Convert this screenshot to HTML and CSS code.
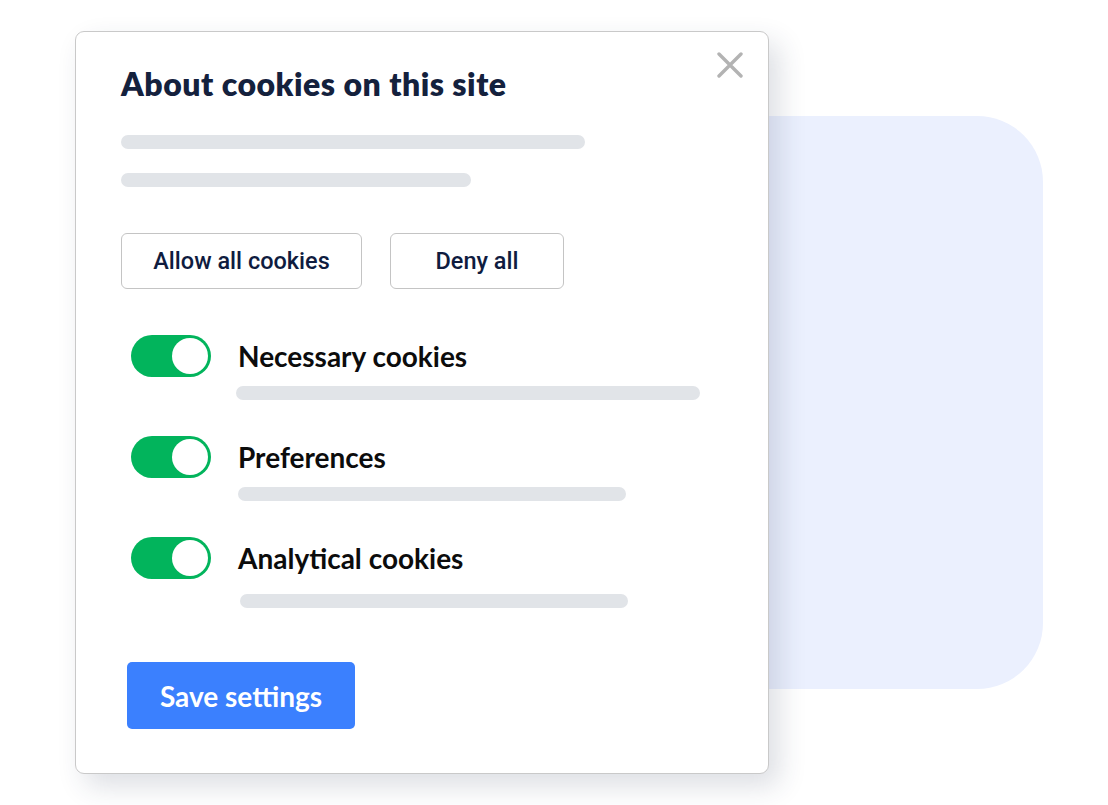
FILE: index.html
```html
<html lang="en">
    <head>
        <title>Cookie settings</title>
        <link rel="stylesheet" href="styles.css">
    </head>
    <body>
        <div class="stage">
            <div class="backdrop"></div>
            <div class="card">
                <button class="close" type="button" aria-label="Close">
                    <svg width="26" height="26" viewBox="0 0 26 26">
                        <path d="M2 2 L24 24 M24 2 L2 24" stroke="#b3b3b3" stroke-width="3.4" stroke-linecap="round" fill="none"/>
                    </svg>
                </button>
                <h1 class="title">About cookies on this site</h1>
                <div class="lines">
                    <div class="bar bar-long"></div>
                    <div class="bar bar-short"></div>
                </div>
                <div class="actions">
                    <button class="outline outline-wide" type="button">Allow all cookies</button>
                    <button class="outline outline-narrow" type="button">Deny all</button>
                </div>
                <div class="options">
                    <div class="option">
                        <span class="toggle"><span class="knob"></span></span>
                        <span class="label">Necessary cookies</span>
                        <div class="bar bar-wide bar-first"></div>
                    </div>
                    <div class="option">
                        <span class="toggle"><span class="knob"></span></span>
                        <span class="label">Preferences</span>
                        <div class="bar bar-mid"></div>
                    </div>
                    <div class="option">
                        <span class="toggle"><span class="knob"></span></span>
                        <span class="label">Analytical cookies</span>
                        <div class="bar bar-mid bar-last"></div>
                    </div>
                </div>
                <button class="save" type="button">Save settings</button>
            </div>
        </div>
    </body>
</html>
```

FILE: styles.css
```css
body {
    margin: 0;
    background: #fff;
    font-family: Lato, "Noto Sans", sans-serif;
}
.stage {
    position: relative;
    width: 1108px;
    height: 805px;
    padding: 31px 0 0 75px;
    box-sizing: border-box;
}

/* light blue panel behind the dialog */
.backdrop {
    position: absolute;
    left: 420px;
    top: 116px;
    width: 623px;
    height: 573px;
    background: #ebf0fe;
    border-radius: 0 66px 66px 0;
}

.card {
    position: relative;
    width: 694px;
    height: 743px;
    box-sizing: border-box;
    padding: 0 0 0 45px;
    background: #fff;
    border: 1px solid #c9c9c9;
    border-radius: 9px;
    box-shadow: 10px 12px 28px rgba(40, 50, 80, 0.16);
}
.close {
    position: absolute;
    top: 20px;
    right: 25px;
    width: 26px;
    height: 26px;
    padding: 0;
    border: none;
    background: none;
}
.close svg {
    display: block;
}

.title {
    margin: 34px 0 0 0;
    font-size: 32px;
    line-height: 36px;
    letter-spacing: 0.5px;
    font-weight: 800;
    color: #14213d;
}

.lines {
    display: flex;
    flex-direction: column;
    gap: 24px;
    margin-top: 33px;
}
.bar {
    height: 14px;
    border-radius: 7px;
    background: #e1e4e8;
}
.bar-long {
    width: 464px;
}
.bar-short {
    width: 350px;
}

.actions {
    display: flex;
    gap: 28px;
    margin-top: 46px;
}
.outline {
    height: 56px;
    box-sizing: border-box;
    border: 1px solid #c4c4c4;
    border-radius: 6px;
    background: #fff;
    font-family: Roboto, sans-serif;
    font-weight: 500;
    font-size: 23.5px;
    color: #0f1c3f;
}
.outline-wide {
    width: 241px;
}
.outline-narrow {
    width: 174px;
}

.options {
    display: flex;
    flex-direction: column;
    margin-top: 46px;
    padding-left: 10px;
}
.option {
    display: grid;
    grid-template-columns: 80px 1fr;
    column-gap: 27px;
    align-items: center;
    height: 101px;
    align-content: start;
}
.toggle {
    display: flex;
    justify-content: flex-end;
    align-items: center;
    width: 80px;
    height: 42px;
    padding: 3px;
    box-sizing: border-box;
    border-radius: 21px;
    background: #02b45c;
}
.knob {
    width: 36px;
    height: 36px;
    border-radius: 50%;
    background: #fff;
}
.label {
    font-size: 28px;
    font-weight: 700;
    color: #0c0c0c;
}
.option .bar {
    grid-column: 2;
    margin-top: 9px;
}
.bar-wide {
    width: 464px;
}
.bar-mid {
    width: 388px;
}
.bar-first {
    margin-left: -2px;
}
.option .bar-last {
    margin-top: 15px;
    margin-left: 2px;
}

.save {
    display: block;
    margin: 24px 0 0 6px;
    width: 228px;
    height: 67px;
    border: none;
    border-radius: 5px;
    background: #3b80fe;
    color: #fff;
    font-family: Lato, sans-serif;
    font-size: 28px;
    font-weight: 700;
}
```
